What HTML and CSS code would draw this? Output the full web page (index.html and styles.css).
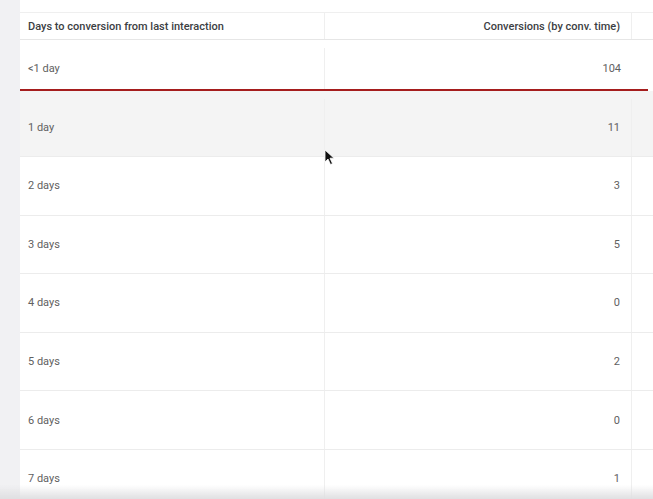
FILE: index.html
```html
<!DOCTYPE html>
<html lang="en">

<head>
    <meta charset="UTF-8">
    <meta name="viewport" content="width=device-width, initial-scale=1.0">
    <title>Days to conversion</title>
    <link rel="stylesheet" href="styles.css">
</head>

<body>

    <div class="page">
        <aside class="side"></aside>

        <main class="report">
            <div class="row head">
                <div class="cell">Days to conversion from last interaction</div>
                <div class="cell num">Conversions (by conv. time)</div>
                <div class="cell pad"></div>
            </div>
            <div class="row first">
                <div class="cell">&lt;1 day</div>
                <div class="cell num">104</div>
                <div class="cell pad"></div>
            </div>
            <div class="row hover">
                <div class="cell">1 day</div>
                <div class="cell num">11</div>
                <div class="cell pad"></div>
            </div>
            <div class="row">
                <div class="cell">2 days</div>
                <div class="cell num">3</div>
                <div class="cell pad"></div>
            </div>
            <div class="row">
                <div class="cell">3 days</div>
                <div class="cell num">5</div>
                <div class="cell pad"></div>
            </div>
            <div class="row">
                <div class="cell">4 days</div>
                <div class="cell num">0</div>
                <div class="cell pad"></div>
            </div>
            <div class="row">
                <div class="cell">5 days</div>
                <div class="cell num">2</div>
                <div class="cell pad"></div>
            </div>
            <div class="row">
                <div class="cell">6 days</div>
                <div class="cell num">0</div>
                <div class="cell pad"></div>
            </div>
            <div class="row">
                <div class="cell">7 days</div>
                <div class="cell num">1</div>
                <div class="cell pad"></div>
            </div>

            <!-- mouse pointer -->
            <svg class="pointer" width="12" height="18" viewBox="0 0 12 18">
                <path d="M1 1 L1 13 L4 10 L6.5 15.5 L8.5 14.6 L6 9.2 L10 9.2 Z" fill="#111" stroke="#fff" stroke-width="0.8"/>
            </svg>
        </main>
    </div>

    <div class="fade"></div>

</body>

</html>
```

FILE: styles.css
```css
* {
    margin: 0;
    box-sizing: border-box;
}

body {
    font-family: Roboto, 'Liberation Sans', Arial, sans-serif;
    font-size: 11px;
    color: #616161;
    background-color: #fff;
    height: 499px;
    overflow: hidden;
}

.page {
    display: flex;
    height: 100%;
}

.side {
    width: 20px;
    flex-shrink: 0;
    background-color: #f1f1f3;
}

.report {
    position: relative;
    flex: 1;
    padding-top: 12px;
}

.row {
    display: grid;
    grid-template-columns: 305px 307px 1fr;
    height: 58.6px;
    border-bottom: 1px solid #ececec;
}

.cell {
    display: flex;
    align-items: center;
    padding: 0 8px;
    border-right: 1px solid #efefef;
}

.cell.num {
    justify-content: flex-end;
    padding-right: 11px;
}

.cell.pad {
    border-right: none;
}

.head {
    height: 28px;
    border-top: 1px solid #efefef;
    border-bottom: 1px solid #e6e6e6;
    color: #3c4043;
    font-weight: 500;
}

.first {
    height: 51px;
    padding-top: 8px;
    border-bottom: 2px solid #a51d1d;
    margin-right: 21px;
}

.first .cell.num {
    border-right: none;
}

.hover {
    height: 66px;
    padding-top: 8px;
    background-color: #f4f4f4;
}

.pointer {
    position: absolute;
    left: 304px;
    top: 149px;
}

.fade {
    position: fixed;
    left: 0;
    right: 0;
    bottom: 0;
    height: 14px;
    background: linear-gradient(to bottom, rgba(230, 230, 230, 0), rgba(222, 222, 224, 0.95));
}
```
